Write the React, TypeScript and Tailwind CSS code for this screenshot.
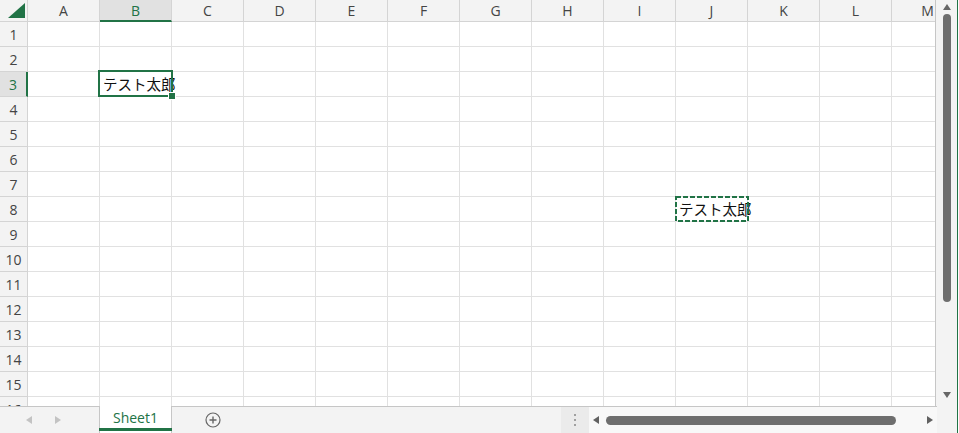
import React from "react";

const COLS = ["A", "B", "C", "D", "E", "F", "G", "H", "I", "J", "K", "L", "M"];
const ROWS = Array.from({ length: 16 }, (_, i) => i + 1);

const cellText: Record<string, string> = {
  B3: "テスト太郎",
  J8: "テスト太郎",
};

const headFont = { fontFamily: '"Open Sans", "Noto Sans", sans-serif' };
const jpFont = { fontFamily: '"Noto Sans CJK JP", "Noto Sans", sans-serif' };

const Triangle: React.FC<{ dir: "left" | "right" | "up" | "down"; color: string; size?: number }> = ({
  dir,
  color,
  size = 8,
}) => {
  const pts = {
    left: "6,0 6,8 0,4",
    right: "0,0 0,8 6,4",
    up: "0,6 8,6 4,0",
    down: "0,0 8,0 4,6",
  }[dir];
  const w = dir === "left" || dir === "right" ? 6 : 8;
  const h = dir === "left" || dir === "right" ? 8 : 6;
  return (
    <svg width={w * (size / 8)} height={h * (size / 8)} viewBox={`0 0 ${w} ${h}`}>
      <polygon points={pts} fill={color} />
    </svg>
  );
};

const Sheet: React.FC = () => (
  <div className="relative w-[936px] h-[406px] overflow-hidden border-r border-[#c6c6c6] bg-white">
    {/* column headers */}
    <div className="flex h-[22px]">
      <div className="w-[28px] shrink-0 bg-[#f3f3f3] border-r border-b border-[#d4d4d4] relative">
        <svg width="28" height="22" className="absolute left-0 top-0">
          <polygon points="25,3 25,18 8,18" fill="#217346" />
        </svg>
      </div>
      {COLS.map((c) => (
        <div
          key={c}
          style={headFont}
          className={
            c === "B"
              ? "w-[72px] shrink-0 flex items-center justify-center text-[14px] bg-[#e1e1e1] border-r border-[#d4d4d4] border-b-2 border-b-[#217346] text-[#217346]"
              : "w-[72px] shrink-0 flex items-center justify-center text-[14px] bg-[#f3f3f3] border-r border-b border-[#d4d4d4] text-[#444]"
          }
        >
          {c}
        </div>
      ))}
    </div>

    {ROWS.map((r) => (
      <div key={r} className="flex h-[25px]">
        <div
          style={headFont}
          className={
            r === 3
              ? "w-[28px] shrink-0 flex items-center justify-center text-[14px] bg-[#e1e1e1] border-b border-[#d4d4d4] border-r-2 border-r-[#217346] text-[#217346]"
              : "w-[28px] shrink-0 flex items-center justify-center text-[14px] bg-[#f3f3f3] border-r border-b border-[#d4d4d4] text-[#444]"
          }
        >
          {r}
        </div>
        {COLS.map((c) => {
          const t = cellText[`${c}${r}`];
          return (
            <div
              key={c}
              className="w-[72px] shrink-0 border-r border-b border-[#e1e1e1] flex items-center pl-[3px] whitespace-nowrap overflow-visible"
            >
              {t && (
                <span style={jpFont} className="shrink-0 text-[14.5px] text-[#111] leading-none">
                  {t}
                </span>
              )}
            </div>
          );
        })}
      </div>
    ))}

    {/* active cell B3 */}
    <div className="absolute left-[98px] top-[70px] w-[75px] h-[27px] border-2 border-[#217346] pointer-events-none" />
    <div className="absolute left-[169px] top-[93px] w-[6px] h-[6px] bg-[#217346] outline outline-1 outline-white" />

    {/* copy marquee J8 */}
    <svg className="absolute left-[675px] top-[196px]" width="74" height="26">
      <rect x="1" y="1" width="72" height="24" fill="none" stroke="#217346" strokeWidth="2" strokeDasharray="5 2" />
    </svg>
  </div>
);

const VScroll: React.FC = () => (
  <div className="w-[21px] h-[406px] bg-[#f3f3f3] flex flex-col items-center">
    <div className="h-[12px] flex items-center justify-center pt-[1px]">
      <Triangle dir="up" color="#666" />
    </div>
    <div className="mt-[2px] w-[8px] h-[288px] rounded-full bg-[#6e6e6e]" />
    <div className="flex-1" />
    <div className="h-[14px] flex items-start justify-center">
      <Triangle dir="down" color="#666" />
    </div>
  </div>
);

const BottomBar: React.FC = () => (
  <div className="flex h-[27px] bg-[#f3f3f3]">
    <div className="w-[99px] shrink-0 border-t border-[#c6c6c6] flex items-center">
      <div className="ml-[26px]">
        <Triangle dir="left" color="#c3c3c3" />
      </div>
      <div className="ml-[23px]">
        <Triangle dir="right" color="#c3c3c3" />
      </div>
    </div>
    <div className="w-[73px] shrink-0 bg-white border-x border-[#c6c6c6] flex flex-col">
      <div
        style={headFont}
        className="flex-1 flex items-center justify-center text-[14px] text-[#217346]"
      >
        Sheet1
      </div>
      <div className="h-[3px] bg-[#217346] mb-[2px] -mx-px" />
    </div>
    <div className="w-[389px] shrink-0 border-t border-[#c6c6c6] flex items-center">
      <svg className="ml-[33px]" width="16" height="16" viewBox="0 0 16 16">
        <circle cx="8" cy="8" r="7" fill="none" stroke="#666" strokeWidth="1.2" />
        <path d="M8 4.5v7M4.5 8h7" stroke="#666" strokeWidth="1.4" />
      </svg>
    </div>
    <div className="w-[28px] shrink-0 border-t border-[#c6c6c6] bg-[#ebebeb] flex flex-col items-center justify-center gap-[3px]">
      <div className="w-[2px] h-[2px] bg-[#a0a0a0]" />
      <div className="w-[2px] h-[2px] bg-[#a0a0a0]" />
      <div className="w-[2px] h-[2px] bg-[#a0a0a0]" />
    </div>
    <div className="w-[348px] shrink-0 border-t border-[#c6c6c6] bg-[#f8f8f8] flex items-center">
      <div className="ml-[4px]">
        <Triangle dir="left" color="#616161" />
      </div>
      <div className="ml-[7px] w-[290px] h-[9px] rounded-full bg-[#6e6e6e]" />
      <div className="ml-[31px]">
        <Triangle dir="right" color="#616161" />
      </div>
    </div>
    <div className="flex-1 bg-[#f3f3f3]" />
  </div>
);

export default function App() {
  return (
    <div className="w-[959px] h-[433px] flex bg-white overflow-hidden">
      <div className="w-[957px] flex flex-col">
        <div className="flex">
          <Sheet />
          <VScroll />
        </div>
        <BottomBar />
      </div>
      <div className="w-px bg-[#217346]" />
      <div className="w-px bg-white" />
    </div>
  );
}
